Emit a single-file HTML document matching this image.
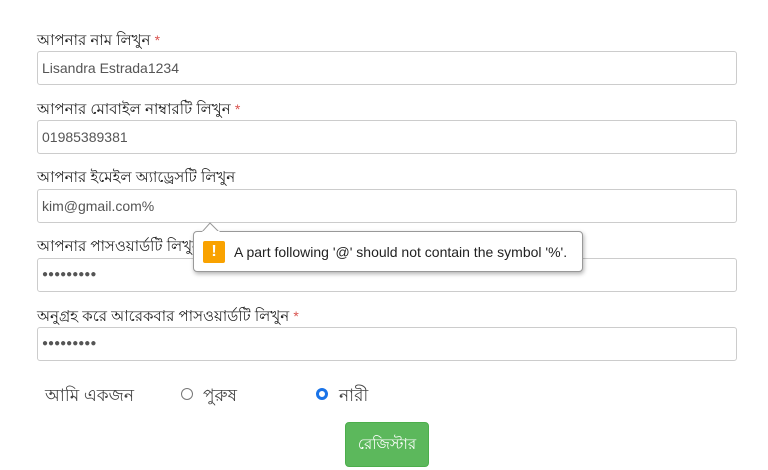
<!DOCTYPE html>
<html><head><meta charset="utf-8"><style>
body{margin:0;width:768px;height:470px;background:#fff;font-family:"Liberation Sans",sans-serif;position:relative;overflow:hidden;color:#333}
.l{position:absolute;left:37px;font-size:15px;line-height:16px;color:#222}
.l b{color:#d9534f;font-weight:normal;font-size:14px}
.i{position:absolute;left:37px;width:694px;height:32px;border:1px solid #ccc;border-radius:3px;font-size:14px;line-height:32px;padding-left:4px;box-sizing:content-box;color:#555}
.p{font-size:10px;letter-spacing:0}
.r{position:absolute;width:12px;height:12px;border:1px solid #777;border-radius:50%;box-sizing:border-box}
</style></head><body>
<div class="l" style="top:32px">আপনার নাম লিখুন <b>*</b></div>
<div class="i" style="top:51px">Lisandra Estrada1234</div>
<div class="l" style="top:101px">আপনার মোবাইল নাম্বারটি লিখুন <b>*</b></div>
<div class="i" style="top:120px">01985389381</div>
<div class="l" style="top:170px">আপনার ইমেইল অ্যাড্রেসটি লিখুন</div>
<div class="i" style="top:189px">kim@gmail.com%</div>
<div class="l" style="top:239px">আপনার পাসওয়ার্ডটি লিখুন</div>
<div class="i p" style="top:258px">●●●●●●●●●</div>
<div class="l" style="top:308px">অনুগ্রহ করে আরেকবার পাসওয়ার্ডটি লিখুন <b>*</b></div>
<div class="i p" style="top:327px">●●●●●●●●●</div>
<div style="position:absolute;left:45px;top:383px;font-size:17px;color:#444">আমি একজন</div>
<div class="r" style="left:181px;top:388px"></div>
<div style="position:absolute;left:203px;top:383px;font-size:17px;color:#444">পুরুষ</div>
<div class="r" style="left:316px;top:388px;border:3px solid #1a73e8"></div>
<div style="position:absolute;left:339px;top:383px;font-size:17px;color:#444">নারী</div>
<div style="position:absolute;left:345px;top:422px;width:84px;height:45px;background:#5cb85c;border:1px solid #4cae4c;border-radius:4px;box-sizing:border-box;color:#fff;font-size:15px;line-height:43px;text-align:center">রেজিস্টার</div>
<div style="position:absolute;left:193px;top:231px;width:390px;height:41px;background:#fff;border:1px solid #999;border-radius:4px;box-sizing:border-box;box-shadow:1px 2px 4px rgba(0,0,0,.3)">
<div style="position:absolute;left:9px;top:9px;width:22px;height:22px;background:#f9a200;border-radius:2px;color:#fff;font-weight:bold;font-size:16px;line-height:22px;text-align:center">!</div>
<div style="position:absolute;left:40px;top:12px;font-size:14px;color:#222;white-space:nowrap">A part following '@' should not contain the symbol '%'.</div>
</div>
<svg style="position:absolute;left:202px;top:222px" width="18" height="10"><path d="M0 10 L8 1 L17 10" fill="#fff" stroke="#999"/><rect x="0.5" y="9" width="17" height="2" fill="#fff"/></svg>
</body></html>
